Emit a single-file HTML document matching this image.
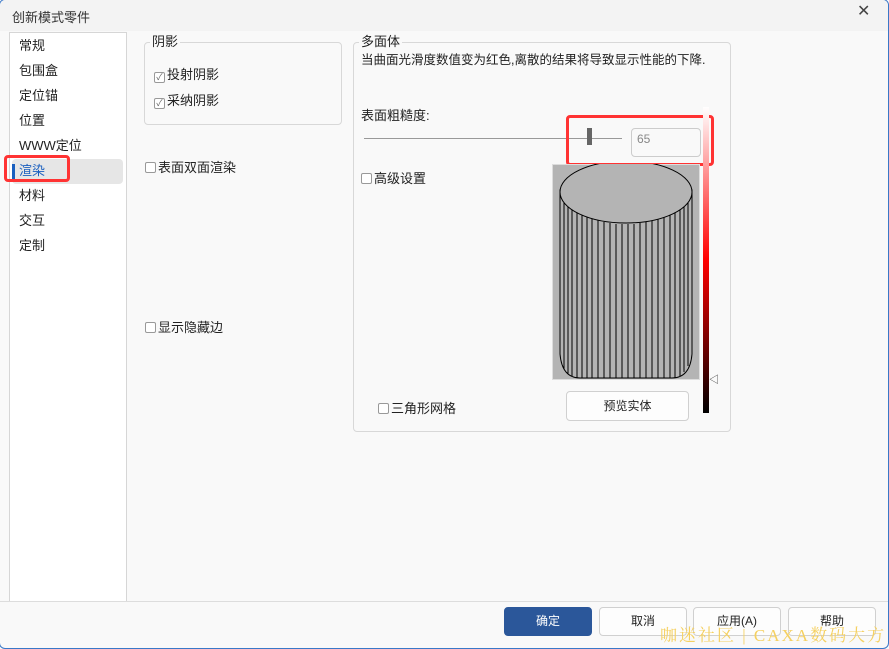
<!DOCTYPE html>
<html><head><meta charset="utf-8"><style>
*{margin:0;padding:0;box-sizing:border-box}
body{width:889px;height:649px;overflow:hidden;background:#f9f9f9;font-family:"Liberation Sans","Noto Sans CJK SC",sans-serif;font-size:13px;color:#222;position:relative}
.win{position:absolute;left:-1px;top:-1px;width:890px;height:650px;border:1px solid #3a78c8;border-radius:6px;overflow:hidden;background:#f9f9f9}
.title{position:absolute;left:0;top:0;width:888px;height:31px;background:#f3f3f3}
.abs{position:absolute;white-space:nowrap}
.t{margin-top:-3px}
.list{position:absolute;left:9px;top:32px;width:118px;height:570px;background:#fff;border:1px solid #d6d6d6}
.grp{position:absolute;border:1px solid #d8d8d8;border-radius:4px}
.cb{display:inline-block;width:11px;height:11px;border:1px solid #999;border-radius:2px;background:#fff;vertical-align:-1px;margin-right:2px}
.btn{position:absolute;top:607px;height:29px;border:1px solid #d0d0d0;border-radius:4px;background:#fdfdfd;text-align:center;line-height:27px;font-size:12px}
</style></head><body><div class="win">
<div class="title"></div>
<div class="abs" style="left:12px;top:7px;font-size:13px;color:#333">创新模式零件</div>
<div class="abs" style="left:857px;top:1px;font-size:16px;color:#444">✕</div>
<div class="list"></div>
<div class="abs" style="left:12px;top:159px;width:111px;height:25px;background:#e6e6e6;border-radius:4px"></div>
<div class="abs" style="left:12px;top:164px;width:3px;height:15px;background:#1a5fbf"></div>
<div class="abs" style="left:4px;top:155px;width:66px;height:27px;border:3px solid #f33;border-radius:4px"></div>
<div class="abs" style="left:19px;top:33px;line-height:25px;font-size:13px">常规<br>包围盒<br>定位锚<br>位置<br>WWW定位<br><span style="color:#1a5fbf">渲染</span><br>材料<br>交互<br>定制</div>
<div class="grp" style="left:144px;top:42px;width:198px;height:83px"></div>
<div class="abs" style="left:150px;top:31px;background:#f9f9f9;padding:0 2px">阴影</div>
<div class="abs" style="left:154px;top:64px"><span class="cb" style="font-size:9px;line-height:9px;color:#666;text-align:center">✓</span>投射阴影</div>
<div class="abs" style="left:154px;top:90px"><span class="cb" style="font-size:9px;line-height:9px;color:#666;text-align:center">✓</span>采纳阴影</div>
<div class="abs" style="left:145px;top:157px"><span class="cb"></span>表面双面渲染</div>
<div class="abs" style="left:145px;top:317px"><span class="cb"></span>显示隐藏边</div>
<div class="grp" style="left:353px;top:42px;width:378px;height:390px"></div>
<div class="abs" style="left:359px;top:31px;background:#f9f9f9;padding:0 2px">多面体</div>
<div class="abs" style="left:361px;top:49px;font-size:12.5px">当曲面光滑度数值变为红色,离散的结果将导致显示性能的下降.</div>
<div class="abs" style="left:361px;top:105px">表面粗糙度:</div>
<div class="abs" style="left:364px;top:138px;width:258px;height:1px;background:#999"></div>
<div class="abs" style="left:587px;top:128px;width:5px;height:17px;background:#666"></div>
<div class="abs" style="left:631px;top:128px;width:70px;height:29px;border:1px solid #ccc;border-radius:4px;color:#888;padding:3px 5px;font-size:12px">65</div>
<div class="abs" style="left:566px;top:115px;width:148px;height:51px;border:3px solid #f33;border-radius:4px"></div>
<div class="abs" style="left:361px;top:168px"><span class="cb"></span>高级设置</div>
<div class="abs" style="left:703px;top:107px;width:6px;height:306px;background:linear-gradient(#fff,#f00 50%,#000)"></div>
<div class="abs" style="left:709px;top:371px;font-size:10px;color:#333">◁</div>
<svg class="abs" style="left:552px;top:164px" width="148" height="216">
<rect x="0.5" y="0.5" width="147" height="215" fill="#b4b4b4" stroke="#ddd"/>
<path d="M8 26 L8 190 Q10 214 28 214 L120 214 Q138 214 140 190 L140 26 Z" fill="#b4b4b4" stroke="#000"/>
<g stroke="#000" stroke-width="1">
<line x1="12" y1="36" x2="12" y2="205"/><line x1="16" y1="40" x2="16" y2="210"/><line x1="20" y1="44" x2="20" y2="212"/><line x1="25" y1="47" x2="25" y2="214"/><line x1="30" y1="50" x2="30" y2="214"/><line x1="35" y1="52" x2="35" y2="214"/><line x1="40" y1="54" x2="40" y2="214"/><line x1="46" y1="56" x2="46" y2="214"/><line x1="52" y1="58" x2="52" y2="214"/><line x1="58" y1="59" x2="58" y2="214"/><line x1="64" y1="60" x2="64" y2="214"/><line x1="70" y1="60" x2="70" y2="214"/><line x1="76" y1="60" x2="76" y2="214"/><line x1="82" y1="60" x2="82" y2="214"/><line x1="88" y1="59" x2="88" y2="214"/><line x1="94" y1="58" x2="94" y2="214"/><line x1="100" y1="56" x2="100" y2="214"/><line x1="106" y1="54" x2="106" y2="214"/><line x1="112" y1="52" x2="112" y2="214"/><line x1="118" y1="49" x2="118" y2="214"/><line x1="123" y1="46" x2="123" y2="214"/><line x1="128" y1="43" x2="128" y2="212"/><line x1="132" y1="39" x2="132" y2="208"/><line x1="136" y1="34" x2="136" y2="202"/>
</g>
<ellipse cx="74" cy="28" rx="66" ry="31" fill="#b4b4b4" stroke="#000"/>
</svg>
<div class="abs" style="left:378px;top:398px"><span class="cb"></span>三角形网格</div>
<div class="btn" style="left:566px;top:391px;width:123px;height:30px;line-height:28px">预览实体</div>
<div class="abs" style="left:0;top:601px;width:889px;height:1px;background:#ddd"></div>
<div class="btn" style="left:504px;width:88px;background:#2b579a;border-color:#2b579a;color:#fff">确定</div>
<div class="btn" style="left:599px;width:88px">取消</div>
<div class="btn" style="left:693px;width:88px">应用(A)</div>
<div class="btn" style="left:788px;width:88px">帮助</div>
<div class="abs" style="left:660px;top:621px;font-size:17px;letter-spacing:2px;color:#f5d060;font-family:'Liberation Serif','Noto Serif CJK SC',serif">咖迷社区 | CAXA数码大方</div>
</div></body></html>
